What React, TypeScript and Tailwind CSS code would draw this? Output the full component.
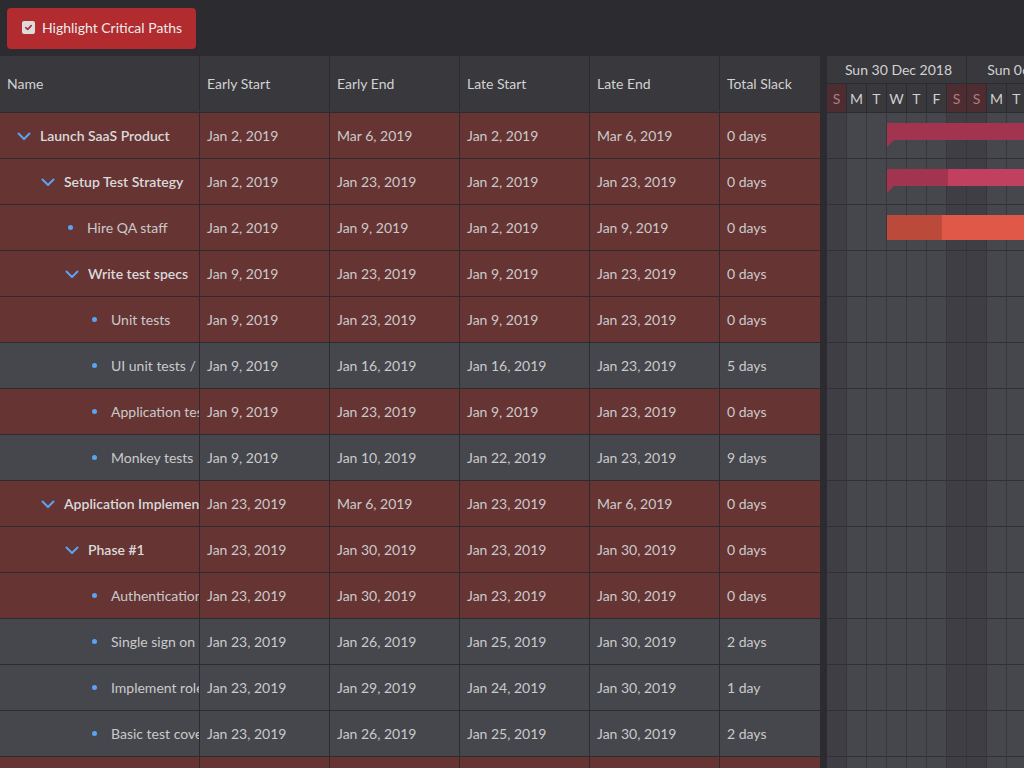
import React from "react";

type Task = {
  name: string;
  level: number;
  parent?: boolean;
  critical: boolean;
  es: string;
  ee: string;
  ls: string;
  le: string;
  slack: string;
};

const tasks: Task[] = [
  { name: "Launch SaaS Product", level: 0, parent: true, critical: true, es: "Jan 2, 2019", ee: "Mar 6, 2019", ls: "Jan 2, 2019", le: "Mar 6, 2019", slack: "0 days" },
  { name: "Setup Test Strategy", level: 1, parent: true, critical: true, es: "Jan 2, 2019", ee: "Jan 23, 2019", ls: "Jan 2, 2019", le: "Jan 23, 2019", slack: "0 days" },
  { name: "Hire QA staff", level: 2, critical: true, es: "Jan 2, 2019", ee: "Jan 9, 2019", ls: "Jan 2, 2019", le: "Jan 9, 2019", slack: "0 days" },
  { name: "Write test specs", level: 2, parent: true, critical: true, es: "Jan 9, 2019", ee: "Jan 23, 2019", ls: "Jan 9, 2019", le: "Jan 23, 2019", slack: "0 days" },
  { name: "Unit tests", level: 3, critical: true, es: "Jan 9, 2019", ee: "Jan 23, 2019", ls: "Jan 9, 2019", le: "Jan 23, 2019", slack: "0 days" },
  { name: "UI unit tests / individual screens", level: 3, critical: false, es: "Jan 9, 2019", ee: "Jan 16, 2019", ls: "Jan 16, 2019", le: "Jan 23, 2019", slack: "5 days" },
  { name: "Application tests", level: 3, critical: true, es: "Jan 9, 2019", ee: "Jan 23, 2019", ls: "Jan 9, 2019", le: "Jan 23, 2019", slack: "0 days" },
  { name: "Monkey tests", level: 3, critical: false, es: "Jan 9, 2019", ee: "Jan 10, 2019", ls: "Jan 22, 2019", le: "Jan 23, 2019", slack: "9 days" },
  { name: "Application Implementation", level: 1, parent: true, critical: true, es: "Jan 23, 2019", ee: "Mar 6, 2019", ls: "Jan 23, 2019", le: "Mar 6, 2019", slack: "0 days" },
  { name: "Phase #1", level: 2, parent: true, critical: true, es: "Jan 23, 2019", ee: "Jan 30, 2019", ls: "Jan 23, 2019", le: "Jan 30, 2019", slack: "0 days" },
  { name: "Authentication module", level: 3, critical: true, es: "Jan 23, 2019", ee: "Jan 30, 2019", ls: "Jan 23, 2019", le: "Jan 30, 2019", slack: "0 days" },
  { name: "Single sign on", level: 3, critical: false, es: "Jan 23, 2019", ee: "Jan 26, 2019", ls: "Jan 25, 2019", le: "Jan 30, 2019", slack: "2 days" },
  { name: "Implement roles", level: 3, critical: false, es: "Jan 23, 2019", ee: "Jan 29, 2019", ls: "Jan 24, 2019", le: "Jan 30, 2019", slack: "1 day" },
  { name: "Basic test coverage", level: 3, critical: false, es: "Jan 23, 2019", ee: "Jan 26, 2019", ls: "Jan 25, 2019", le: "Jan 30, 2019", slack: "2 days" },
  { name: "Phase #2", level: 2, parent: true, critical: true, es: "Jan 30, 2019", ee: "Feb 20, 2019", ls: "Jan 30, 2019", le: "Feb 20, 2019", slack: "0 days" },
];

const days = ["S", "M", "T", "W", "T", "F", "S", "S", "M", "T", "W", "T", "F", "S"];
const weekend = (i: number) => i % 7 === 0 || i % 7 === 6;

function Chevron() {
  return (
    <svg width="14" height="14" viewBox="0 0 14 14" fill="none">
      <path d="M1.5 4.5 L7 10 L12.5 4.5" stroke="#5ba3f2" strokeWidth="2" strokeLinecap="round" strokeLinejoin="round" />
    </svg>
  );
}

function NameCell({ task }: { task: Task }) {
  return (
    <div className="flex items-center w-[200px] shrink-0 h-full border-r border-[#2b2b30] overflow-hidden whitespace-nowrap pl-3">
      <div className="shrink-0" style={{ width: task.level * 24 }} />
      {task.parent ? (
        <>
          <div className="w-6 shrink-0 flex items-center justify-center">
            <Chevron />
          </div>
          <span className="ml-1 font-semibold text-[#dadada]">{task.name}</span>
        </>
      ) : (
        <>
          <div className="w-5 shrink-0 flex items-center justify-center">
            <span className="block w-[5px] h-[5px] rounded-full bg-[#5ba3f2]" />
          </div>
          <span className="ml-[7px] text-[#cacaca]">{task.name}</span>
        </>
      )}
    </div>
  );
}

function Cell({ children, last }: { children: React.ReactNode; last?: boolean }) {
  return (
    <div
      className={
        last
          ? "flex items-center w-[100px] shrink-0 h-full px-[7px] whitespace-nowrap overflow-hidden"
          : "flex items-center w-[130px] shrink-0 h-full px-[7px] border-r border-[#2b2b30] whitespace-nowrap overflow-hidden"
      }
    >
      {children}
    </div>
  );
}

function Bar({ row }: { row: number }) {
  if (row === 0 || row === 1) {
    return (
      <div className="absolute left-[60px] top-[10px] right-0 h-[17px]">
        <div className={row === 0 ? "h-full bg-[#a3344f]" : "h-full bg-[#c2405f]"}>
          {row === 1 && <div className="h-full w-[61px] bg-[#a3344f]" />}
        </div>
        <svg className="absolute left-0 top-[17px]" width="8" height="8" viewBox="0 0 8 8">
          <polygon points="0,0 7,0 0,7" fill="#a3344f" />
        </svg>
      </div>
    );
  }
  if (row === 2) {
    return (
      <div className="absolute left-[60px] top-[10px] right-0 h-[25px] bg-[#df5848] flex">
        <div className="h-full w-[55px] bg-[#bb4a3a] border-r border-[#c44c3c]" />
      </div>
    );
  }
  return null;
}

export default function App() {
  return (
    <div className="w-[1024px] h-[768px] overflow-hidden bg-[#2b2b30] text-[14px] text-[#cacaca]" style={{ fontFamily: "Lato, 'Open Sans', sans-serif" }}>
      <div className="h-[56px] flex items-center px-[7px]">
        <button className="flex items-center gap-[7px] h-[41px] w-[189px] rounded-sm bg-[#b12b2f] pl-[15px] pb-px text-[#ececec] text-[14px]">
          <span className="w-[13px] h-[13px] rounded-[2px] bg-[#dcdcdc] flex items-center justify-center">
            <svg width="9" height="9" viewBox="0 0 9 9" fill="none">
              <path d="M1.8 4.6 L3.7 6.4 L7.2 2.6" stroke="#b12b2f" strokeWidth="1.6" strokeLinecap="round" strokeLinejoin="round" />
            </svg>
          </span>
          Highlight Critical Paths
        </button>
      </div>

      <div className="flex h-[712px]">
        {/* grid */}
        <div className="w-[820px] shrink-0 flex flex-col">
          <div className="flex h-[57px] shrink-0 bg-[#38383d] border-b border-[#2b2b30] text-[#d2d2d2] pb-px">
            <div className="flex items-center w-[200px] shrink-0 h-full px-[7px] border-r border-[#2b2b30]">Name</div>
            <Cell>Early Start</Cell>
            <Cell>Early End</Cell>
            <Cell>Late Start</Cell>
            <Cell>Late End</Cell>
            <Cell last>Total Slack</Cell>
          </div>
          {tasks.map((t, i) => (
            <div
              key={`grid-row-${i}`}
              className={
                t.critical
                  ? "flex h-[46px] shrink-0 bg-[#673434] border-b border-[#2b2b30]"
                  : "flex h-[46px] shrink-0 bg-[#46464d] border-b border-[#2b2b30]"
              }
            >
              <NameCell task={t} />
              <Cell>{t.es}</Cell>
              <Cell>{t.ee}</Cell>
              <Cell>{t.ls}</Cell>
              <Cell>{t.le}</Cell>
              <Cell last>{t.slack}</Cell>
            </div>
          ))}
        </div>

        {/* splitter */}
        <div className="w-[7px] shrink-0 bg-[#2b2b30]" />

        {/* timeline */}
        <div className="flex-1 overflow-hidden flex flex-col">
          <div className="h-[28px] shrink-0 flex bg-[#38383d] border-b border-[#2b2b30] text-[#d2d2d2]">
            <div className="w-[140px] shrink-0 flex items-center justify-center pl-1 border-r border-[#2b2b30] whitespace-nowrap">Sun 30 Dec 2018</div>
            <div className="w-[140px] shrink-0 flex items-center justify-center pl-1 border-r border-[#2b2b30] whitespace-nowrap">Sun 06 Jan 2019</div>
          </div>
          <div className="h-[29px] shrink-0 flex bg-[#38383d] border-b border-[#2b2b30]">
            {days.map((d, i) => (
              <div
                key={`day-${i}`}
                className={
                  weekend(i)
                    ? "w-[20px] shrink-0 flex items-center justify-center border-r border-[#2b2b30] bg-[#4d2d31] text-[#b07c7e]"
                    : "w-[20px] shrink-0 flex items-center justify-center border-r border-[#2b2b30] text-[#cfcfcf]"
                }
              >
                {d}
              </div>
            ))}
          </div>
          {tasks.map((t, r) => (
            <div key={`tl-row-${r}`} className="relative flex h-[46px] shrink-0 border-b border-[#303035]">
              {days.map((_, i) => (
                <div
                  key={`cell-${r}-${i}`}
                  className={
                    weekend(i)
                      ? "w-[20px] shrink-0 h-full border-r border-[#36363b] bg-[#3e3e44]"
                      : "w-[20px] shrink-0 h-full border-r border-[#36363b] bg-[#46464d]"
                  }
                />
              ))}
              <Bar row={r} />
            </div>
          ))}
        </div>
      </div>
    </div>
  );
}
